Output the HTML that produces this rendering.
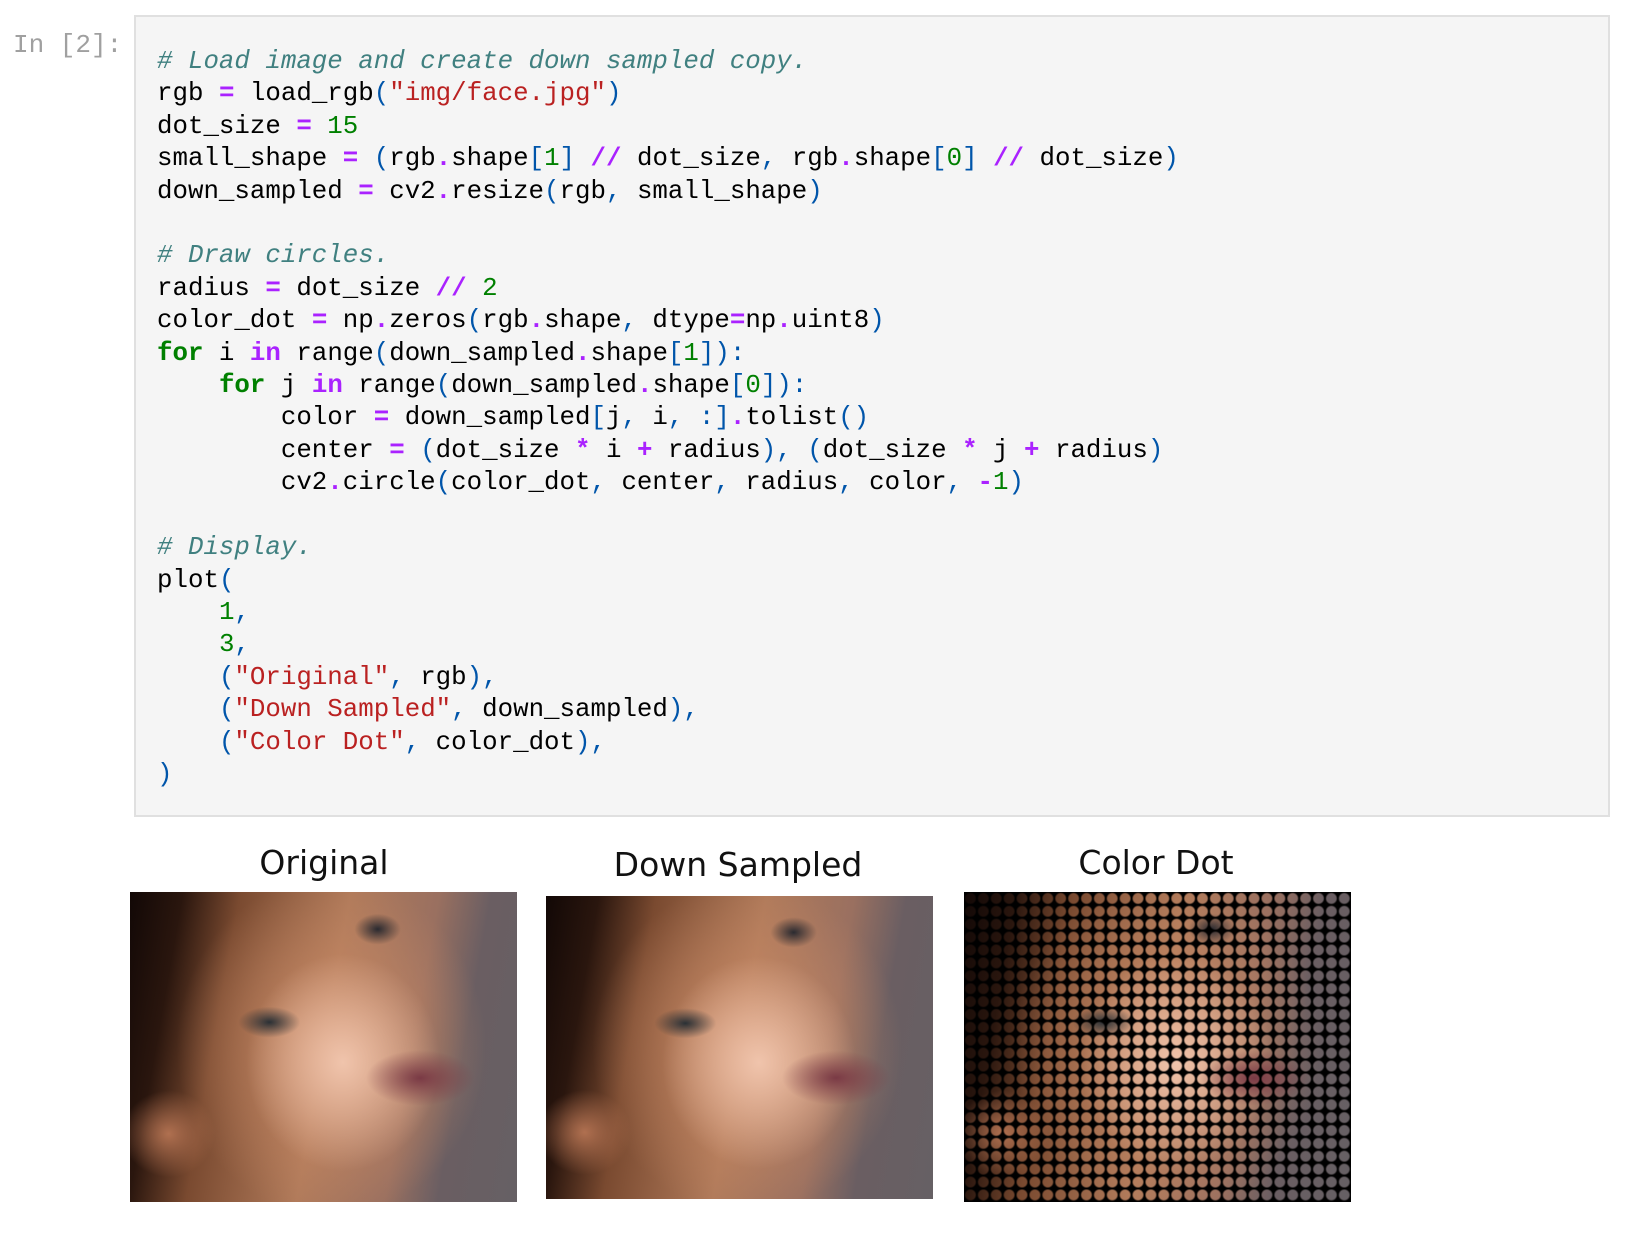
<!DOCTYPE html>
<html><head><meta charset="utf-8"><style>
body{margin:0;width:1626px;height:1244px;background:#fff;position:relative;overflow:hidden;font-family:"Liberation Mono",monospace}
.prompt{position:absolute;left:13px;top:29px;font-size:26px;color:#a0a0a0;line-height:32px}
.box{position:absolute;left:134px;top:15px;width:1476px;height:802px;background:#f5f5f5;border:2px solid #e0e0e0;box-sizing:border-box}
pre{position:absolute;left:157px;top:46px;margin:0;font-family:"Liberation Mono",monospace;font-size:25.8px;line-height:32.4px;color:#000}
.c{color:#408080;font-style:italic}.k{color:#008000;font-weight:bold}.o{color:#aa22ff;font-weight:bold}.s{color:#ba2121}.n{color:#008000}.p{color:#0055aa}
.t{position:absolute;font-family:"DejaVu Sans",sans-serif;font-size:33px;color:#111;transform:translateX(-50%);white-space:nowrap}
.img{position:absolute;overflow:hidden}
.face{background:
radial-gradient(ellipse 14% 9% at 75% 60%,#7a3a45 0%,rgba(122,58,69,0) 100%),
radial-gradient(ellipse 8% 5% at 36% 42%,#2a3035 0%,rgba(40,45,50,0) 100%),
radial-gradient(ellipse 6% 5% at 64% 12%,#2a2a30 0%,rgba(40,40,45,0) 100%),
radial-gradient(ellipse 25% 35% at 55% 55%,#f0c4ac 0%,rgba(220,160,130,0) 100%),
radial-gradient(ellipse 40% 55% at 52% 50%,#c88a66 0%,rgba(190,130,95,0) 100%),
radial-gradient(ellipse 12% 14% at 10% 78%,#b07050 0%,rgba(160,100,70,0) 100%),
linear-gradient(100deg,#120806 0%,#2a160e 12%,#7a4a30 25%,#b07a5a 50%,#9a7060 70%,#6a5e62 82%,#666064 100%)}
.dots{position:absolute;inset:0;background:radial-gradient(circle at center,rgba(0,0,0,0) 0,rgba(0,0,0,0) 4.6px,#000 6.2px);background-size:12.9px 12.9px}
</style></head><body>
<div class="prompt">In [2]:</div>
<div class="box"></div>
<pre><span class="c"># Load image and create down sampled copy.</span>
rgb <span class="o">=</span> load_rgb<span class="p">(</span><span class="s">"img/face.jpg"</span><span class="p">)</span>
dot_size <span class="o">=</span> <span class="n">15</span>
small_shape <span class="o">=</span> <span class="p">(</span>rgb<span class="o">.</span>shape<span class="p">[</span><span class="n">1</span><span class="p">]</span> <span class="o">//</span> dot_size<span class="p">,</span> rgb<span class="o">.</span>shape<span class="p">[</span><span class="n">0</span><span class="p">]</span> <span class="o">//</span> dot_size<span class="p">)</span>
down_sampled <span class="o">=</span> cv2<span class="o">.</span>resize<span class="p">(</span>rgb<span class="p">,</span> small_shape<span class="p">)</span>

<span class="c"># Draw circles.</span>
radius <span class="o">=</span> dot_size <span class="o">//</span> <span class="n">2</span>
color_dot <span class="o">=</span> np<span class="o">.</span>zeros<span class="p">(</span>rgb<span class="o">.</span>shape<span class="p">,</span> dtype<span class="o">=</span>np<span class="o">.</span>uint8<span class="p">)</span>
<span class="k">for</span> i <span class="o">in</span> range<span class="p">(</span>down_sampled<span class="o">.</span>shape<span class="p">[</span><span class="n">1</span><span class="p">]):</span>
    <span class="k">for</span> j <span class="o">in</span> range<span class="p">(</span>down_sampled<span class="o">.</span>shape<span class="p">[</span><span class="n">0</span><span class="p">]):</span>
        color <span class="o">=</span> down_sampled<span class="p">[</span>j<span class="p">,</span> i<span class="p">,</span> <span class="p">:]</span><span class="o">.</span>tolist<span class="p">()</span>
        center <span class="o">=</span> <span class="p">(</span>dot_size <span class="o">*</span> i <span class="o">+</span> radius<span class="p">),</span> <span class="p">(</span>dot_size <span class="o">*</span> j <span class="o">+</span> radius<span class="p">)</span>
        cv2<span class="o">.</span>circle<span class="p">(</span>color_dot<span class="p">,</span> center<span class="p">,</span> radius<span class="p">,</span> color<span class="p">,</span> <span class="o">-</span><span class="n">1</span><span class="p">)</span>

<span class="c"># Display.</span>
plot<span class="p">(</span>
    <span class="n">1</span><span class="p">,</span>
    <span class="n">3</span><span class="p">,</span>
    <span class="p">(</span><span class="s">"Original"</span><span class="p">,</span> rgb<span class="p">),</span>
    <span class="p">(</span><span class="s">"Down Sampled"</span><span class="p">,</span> down_sampled<span class="p">),</span>
    <span class="p">(</span><span class="s">"Color Dot"</span><span class="p">,</span> color_dot<span class="p">),</span>
<span class="p">)</span></pre>
<div class="t" style="left:324px;top:843px">Original</div>
<div class="t" style="left:738px;top:845px">Down Sampled</div>
<div class="t" style="left:1156px;top:843px">Color Dot</div>
<div class="img face" style="left:130px;top:892px;width:387px;height:310px"></div>
<div class="img face" style="left:546px;top:896px;width:387px;height:303px"></div>
<div class="img face" style="left:964px;top:892px;width:387px;height:310px;background-color:#000"><div class="dots"></div></div>
</body></html>
